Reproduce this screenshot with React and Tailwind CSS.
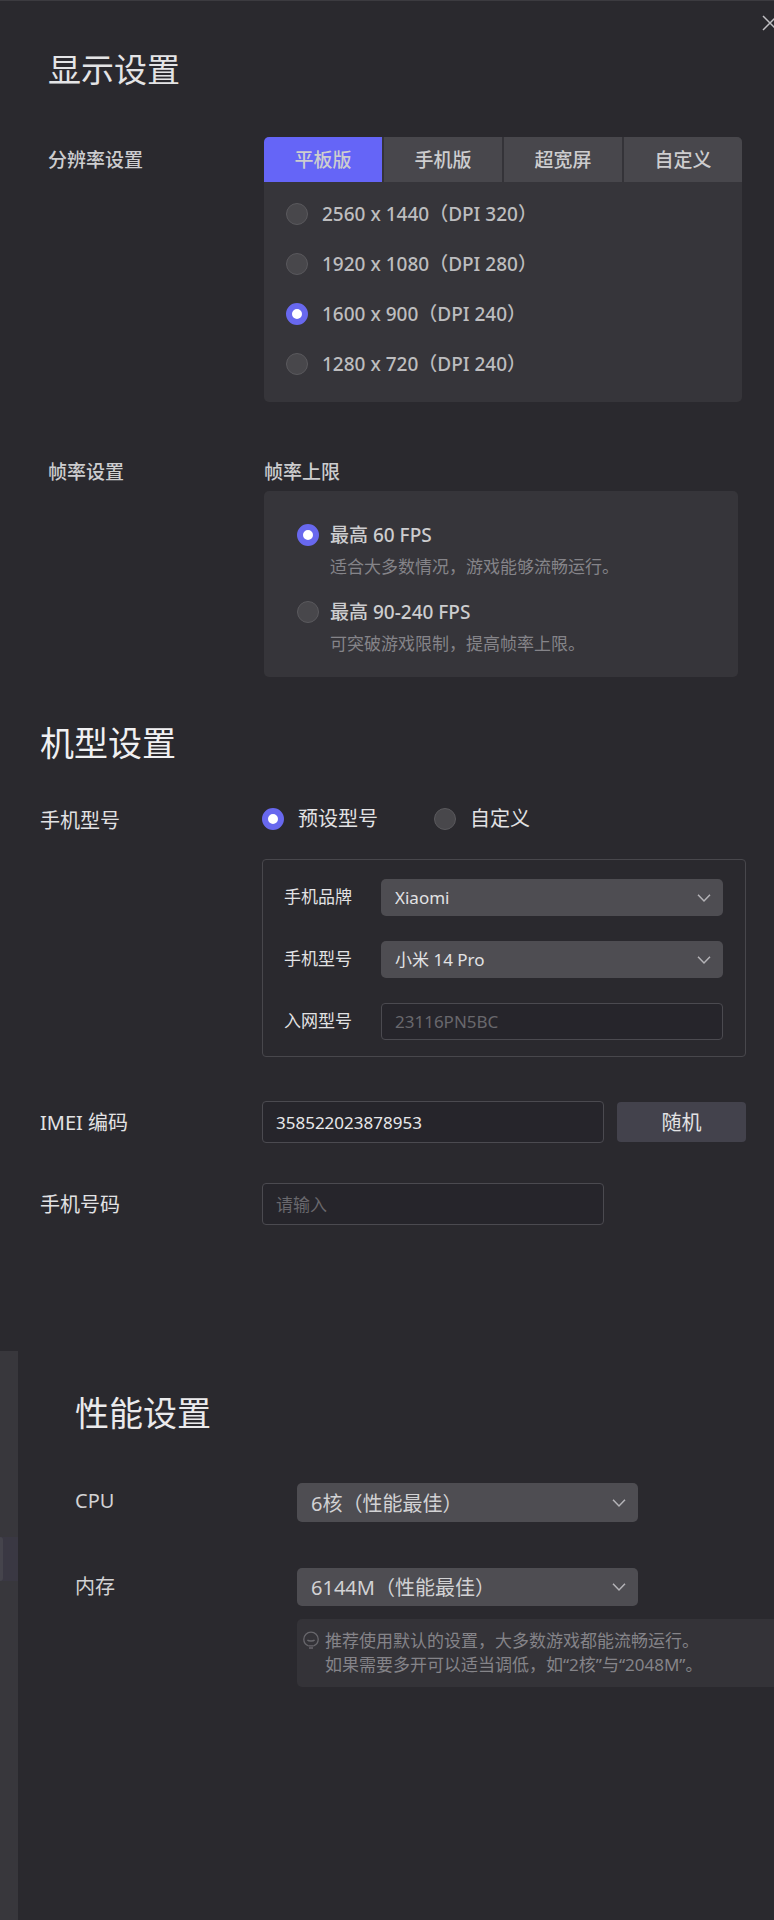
import { useState } from "react";

const radioClass =
  "m-0 size-[22px] shrink-0 appearance-none rounded-full border border-[#5a595d] bg-[#48474b] checked:border-[6px] checked:border-[#6868ee] checked:bg-white";

const fieldClass =
  "w-full rounded-sm border border-[#4b4a50] bg-[#26252b] px-[13px] text-[17px] text-[#e8e8ea] outline-none placeholder:text-[#69686d]";

function Chevron() {
  return (
    <svg
      className="pointer-events-none absolute top-1/2 right-3 -translate-y-1/2"
      width="14"
      height="9"
      viewBox="0 0 14 9"
      fill="none"
      stroke="#b4b3b7"
      strokeWidth="1.5"
      aria-hidden="true"
    >
      <path d="M1 1.2 7 7.5 13 1.2" />
    </svg>
  );
}

function SelectBox({ id, options, className }) {
  return (
    <div className="relative w-full">
      <select
        id={id}
        className={
          "block w-full appearance-none rounded-[5px] bg-[#4e4d52] pr-9 outline-none " + className
        }
      >
        {options.map((o) => (
          <option key={o}>{o}</option>
        ))}
      </select>
      <Chevron />
    </div>
  );
}

const tabs = ["平板版", "手机版", "超宽屏", "自定义"];
const resolutions = [
  "2560 x 1440（DPI 320）",
  "1920 x 1080（DPI 280）",
  "1600 x 900（DPI 240）",
  "1280 x 720（DPI 240）",
];
const rates = [
  { name: "最高 60 FPS", note: "适合大多数情况，游戏能够流畅运行。" },
  { name: "最高 90-240 FPS", note: "可突破游戏限制，提高帧率上限。" },
];

function DisplaySettings() {
  const [tab, setTab] = useState(0);
  const [resolution, setResolution] = useState(2);
  const [rate, setRate] = useState(0);
  return (
    <section className="pr-8 pl-12 font-medium text-[#cdcdcf]">
      <h2 className="text-[33px] leading-[44px] font-normal text-[#e4e4e6]">显示设置</h2>
      <div className="mt-[45px] flex">
        <div className="w-[216px] shrink-0 text-[19px] leading-[47px]">分辨率设置</div>
        <div className="min-w-0 flex-1 overflow-hidden rounded-[5px] bg-[#36353a]">
          <div role="tablist" className="grid grid-cols-4 gap-0.5 bg-[#343338]">
            {tabs.map((name, i) => (
              <button
                key={name}
                type="button"
                role="tab"
                aria-selected={tab === i}
                onClick={() => setTab(i)}
                className={
                  "h-[45px] pt-0.5 text-[19px] " + (tab === i ? "bg-[#6565f7]" : "bg-[#48474c]")
                }
              >
                {name}
              </button>
            ))}
          </div>
          <div className="pt-[7px] pb-[13px] pl-[22px]">
            {resolutions.map((name, i) => (
              <label key={name} className="flex h-[50px] items-center gap-3.5 text-[19px] text-[#bdbdbf]">
                <input
                  type="radio"
                  name="resolution"
                  className={radioClass}
                  checked={resolution === i}
                  onChange={() => setResolution(i)}
                />
                {name}
              </label>
            ))}
          </div>
        </div>
      </div>
      <div className="mt-14 flex text-[19px]">
        <div className="w-[216px] shrink-0 leading-7">帧率设置</div>
        <div className="min-w-0 flex-1 pr-1">
          <div className="leading-7">帧率上限</div>
          <div className="mt-[5px] flex flex-col gap-[19px] rounded-[5px] bg-[#36353a] pt-[30px] pb-[21px] pl-[33px]">
            {rates.map((r, i) => (
              <div key={r.name}>
                <label className="flex items-center gap-[11px] leading-7">
                  <input
                    type="radio"
                    name="rate"
                    className={radioClass}
                    checked={rate === i}
                    onChange={() => setRate(i)}
                  />
                  {r.name}
                </label>
                <p className="mt-1.5 pl-[33px] text-[17px] leading-6 font-normal text-[#858489]">{r.note}</p>
              </div>
            ))}
          </div>
        </div>
      </div>
    </section>
  );
}

function DeviceSettings() {
  const [mode, setMode] = useState(0);
  const [imei, setImei] = useState("358522023878953");
  return (
    <section className="mt-11 pr-7 pl-10 text-[20px] text-[#e2e2e4]">
      <h2 className="text-[34px] leading-[44px] text-[#f0f0f2]">机型设置</h2>
      <div className="mt-10 flex">
        <div className="w-[222px] shrink-0 leading-8">手机型号</div>
        <div className="min-w-0 flex-1">
          <div className="flex gap-14">
            {["预设型号", "自定义"].map((name, i) => (
              <label key={name} className="flex items-center gap-3.5 leading-7">
                <input
                  type="radio"
                  name="mode"
                  className={radioClass}
                  checked={mode === i}
                  onChange={() => setMode(i)}
                />
                {name}
              </label>
            ))}
          </div>
          <div className="mt-[26px] grid grid-cols-[97px_1fr] items-center gap-y-[25px] rounded-sm border border-[#48474c] pt-[19px] pr-[22px] pb-4 pl-[21px] text-[17px]">
            <label htmlFor="brand" className="pb-0.5">手机品牌</label>
            <SelectBox id="brand" options={["Xiaomi"]} className="h-[37px] pl-3.5" />
            <label htmlFor="model" className="pb-0.5">手机型号</label>
            <SelectBox id="model" options={["小米 14 Pro"]} className="h-[37px] pl-3.5" />
            <label htmlFor="network" className="pb-0.5">入网型号</label>
            <input id="network" className={fieldClass + " h-[37px]"} placeholder="23116PN5BC" readOnly />
          </div>
        </div>
      </div>
      <div className="mt-11 flex items-center">
        <label htmlFor="imei" className="w-[222px] shrink-0 pt-0.5">
          IMEI 编码
        </label>
        <div className="flex min-w-0 flex-1 items-center gap-[13px]">
          <input
            id="imei"
            className={fieldClass + " h-[42px] min-w-0 flex-1"}
            value={imei}
            onChange={(e) => setImei(e.target.value)}
          />
          <button type="button" className="h-10 w-[129px] shrink-0 rounded-sm bg-[#43424c] pt-0.5">
            随机
          </button>
        </div>
      </div>
      <div className="mt-10 flex items-center">
        <label htmlFor="phone" className="w-[222px] shrink-0 pt-0.5">
          手机号码
        </label>
        <div className="min-w-0 flex-1 pr-[142px]">
          <input id="phone" className={fieldClass + " block h-[42px]"} placeholder="请输入" />
        </div>
      </div>
    </section>
  );
}

function PerformanceSettings() {
  return (
    <div className="mt-[126px] flex flex-1">
      <aside className="w-[18px] shrink-0 bg-[#38373c] pt-[186px]">
        <div className="h-11 bg-[#3a3843]">
          <div className="h-full w-[3px] rounded-r-sm bg-[#45444c]" />
        </div>
      </aside>
      <section className="min-w-0 flex-1 pt-10 pl-[57px] text-[20px] text-[#d2d2d4]">
        <h2 className="text-[34px] leading-[44px] text-[#eaeaec]">性能设置</h2>
        <div className="mt-12 flex">
          <label htmlFor="cpu" className="w-[222px] shrink-0 leading-9">
            CPU
          </label>
          <div className="min-w-0 flex-1 pr-[136px]">
            <SelectBox id="cpu" options={["6核（性能最佳）"]} className="h-[39px] pt-0.5 pl-3.5" />
          </div>
        </div>
        <div className="mt-[46px] flex">
          <label htmlFor="memory" className="w-[222px] shrink-0 leading-[38px]">
            内存
          </label>
          <div className="min-w-0 flex-1">
            <div className="pr-[136px]">
              <SelectBox id="memory" options={["6144M（性能最佳）"]} className="h-[38px] pt-0.5 pl-3.5" />
            </div>
            <div className="mt-[13px] flex gap-1.5 rounded-l-[5px] bg-[#343338] py-2.5 pl-1.5 text-[17px] leading-6 text-[#858489]">
              <svg
                className="mt-0.5 shrink-0"
                width="16"
                height="20"
                viewBox="0 0 16 20"
                fill="none"
                stroke="#68676c"
                strokeWidth="1.3"
                aria-hidden="true"
              >
                <path d="M5.5 14.8C2.8 13.9.8 11.5.8 8.3a7.2 7.2 0 0 1 14.4 0c0 3.2-2 5.6-4.7 6.5" />
                <path d="M5.5 14.8h5M6 17h4" />
                <path d="M4.4 9c1.2 1.3 6 1.3 7.2 0" />
              </svg>
              <p>
                推荐使用默认的设置，大多数游戏都能流畅运行。
                <br />
                如果需要多开可以适当调低，如“2核”与“2048M”。
              </p>
            </div>
          </div>
        </div>
      </section>
    </div>
  );
}

export default function App() {
  return (
    <main className="flex min-h-screen flex-col overflow-hidden bg-[#2a292e] font-['Noto_Sans','Noto_Sans_CJK_SC',sans-serif]">
      <header className="flex h-12 items-start justify-end border-t border-[#3c3b40]">
        <button type="button" aria-label="关闭" className="-mr-1 pt-3.5">
          <svg width="16" height="16" viewBox="0 0 16 16" stroke="#c0bfc3" strokeWidth="1.5" aria-hidden="true">
            <path d="M1 1l14 14M15 1 1 15" />
          </svg>
        </button>
      </header>
      <DisplaySettings />
      <DeviceSettings />
      <PerformanceSettings />
    </main>
  );
}
